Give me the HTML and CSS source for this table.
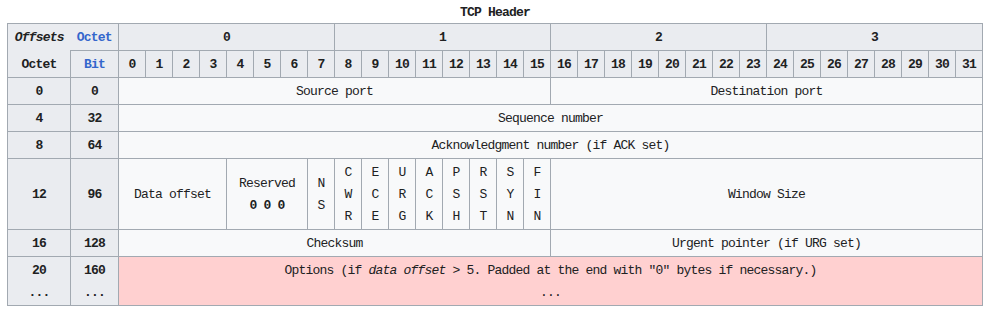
FILE: index.html
```html
<!DOCTYPE html>
<html>
<head>
<meta charset="utf-8">
<link rel="stylesheet" href="styles.css">
</head>
<body>
<div class="page">
<table class="wikitable">
<caption>TCP Header</caption>
<colgroup>
<col class="c-oct"><col class="c-bit">
<col class="c-b"><col class="c-b"><col class="c-b"><col class="c-b"><col class="c-b"><col class="c-b"><col class="c-b"><col class="c-b">
<col class="c-b"><col class="c-b"><col class="c-b"><col class="c-b"><col class="c-b"><col class="c-b"><col class="c-b"><col class="c-b">
<col class="c-b"><col class="c-b"><col class="c-b"><col class="c-b"><col class="c-b"><col class="c-b"><col class="c-b"><col class="c-b">
<col class="c-b"><col class="c-b"><col class="c-b"><col class="c-b"><col class="c-b"><col class="c-b"><col class="c-b"><col class="c-b">
</colgroup>
<tr>
<th class="no-br no-bb"><i>Offsets</i></th>
<th class="no-bl"><span class="link">Octet</span></th>
<th colspan="8">0</th>
<th colspan="8">1</th>
<th colspan="8">2</th>
<th colspan="8">3</th>
</tr>
<tr>
<th class="no-bt">Octet</th>
<th><span class="link">Bit</span></th>
<th>0</th><th>1</th><th>2</th><th>3</th><th>4</th><th>5</th><th>6</th><th>7</th>
<th>8</th><th>9</th><th>10</th><th>11</th><th>12</th><th>13</th><th>14</th><th>15</th>
<th>16</th><th>17</th><th>18</th><th>19</th><th>20</th><th>21</th><th>22</th><th>23</th>
<th>24</th><th>25</th><th>26</th><th>27</th><th>28</th><th>29</th><th>30</th><th>31</th>
</tr>
<tr>
<th>0</th><th>0</th>
<td colspan="16">Source port</td>
<td colspan="16">Destination port</td>
</tr>
<tr>
<th>4</th><th>32</th>
<td colspan="32">Sequence number</td>
</tr>
<tr>
<th>8</th><th>64</th>
<td colspan="32">Acknowledgment number (if ACK set)</td>
</tr>
<tr>
<th>12</th><th>96</th>
<td colspan="4">Data offset</td>
<td colspan="3">Reserved<br><b>0 0 0</b></td>
<td>N<br>S</td>
<td>C<br>W<br>R</td>
<td>E<br>C<br>E</td>
<td>U<br>R<br>G</td>
<td>A<br>C<br>K</td>
<td>P<br>S<br>H</td>
<td>R<br>S<br>T</td>
<td>S<br>Y<br>N</td>
<td>F<br>I<br>N</td>
<td colspan="16">Window Size</td>
</tr>
<tr>
<th>16</th><th>128</th>
<td colspan="16">Checksum</td>
<td colspan="16">Urgent pointer (if URG set)</td>
</tr>
<tr>
<th>20<br>...</th><th>160<br>...</th>
<td colspan="32" class="opt">Options (if <i>data offset</i> &gt; 5. Padded at the end with "0" bytes if necessary.)<br>...</td>
</tr>
</table>
</div>
</body>
</html>
```

FILE: styles.css
```css
html, body {
  margin: 0;
  padding: 0;
  background: #ffffff;
}

.page {
  padding: 2px 0 0 7px;
}

.wikitable {
  border-collapse: collapse;
  table-layout: fixed;
  width: 976px;
  background: #f8f9fa;
  color: #202122;
  font-family: "Liberation Mono", "DejaVu Sans Mono", monospace;
  font-size: 13px;
  letter-spacing: -0.8px;
  text-align: center;
  border: 1px solid #a2a9b1;
}

.wikitable caption {
  font-weight: bold;
  line-height: 21px;
  color: #202122;
}

.c-oct { width: 63px; }
.c-bit { width: 48px; }
.c-b { width: 27px; }

.wikitable th,
.wikitable td {
  border: 1px solid #a2a9b1;
  padding: 3px 0 1px;
  line-height: 22px;
  vertical-align: middle;
  white-space: nowrap;
  overflow: hidden;
}

.wikitable th {
  background: #eaecf0;
  font-weight: bold;
}

.wikitable td.opt {
  background: #ffd0d0;
}

.no-bl { border-left-style: none !important; }
.no-bb { border-bottom-style: none !important; }
.no-bt { border-top-style: none !important; }
.wikitable th.no-br { border-right: none; }

.link {
  color: #3366cc;
}
```
